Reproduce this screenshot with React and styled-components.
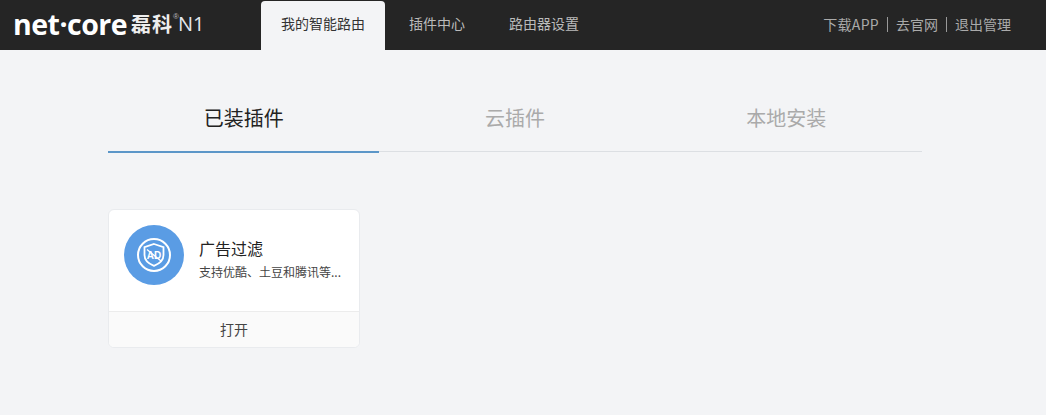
import React, { useState } from 'react'
import styled, { createGlobalStyle } from 'styled-components'

const GlobalStyle = createGlobalStyle`
  html, body {
    margin: 0;
    padding: 0;
    background: #f3f4f6;
    font-family: "Noto Sans CJK SC", "Liberation Sans", sans-serif;
  }
  * { box-sizing: border-box; }
`

const navItems = ['我的智能路由', '插件中心', '路由器设置']
const tabItems = ['已装插件', '云插件', '本地安装']
const headerLinks = ['下载APP', '去官网', '退出管理']

function AdIcon() {
  return (
    <svg width="36" height="36" viewBox="0 0 36 36" fill="none" stroke="#fff">
      <circle cx="18" cy="18" r="16" strokeWidth="2" />
      <path d="M18 7l9.500 3.200v7.800c0 5-4 8.700-9.500 10.800-5.500-2.100-9.500-5.800-9.500-10.800v-7.800z" strokeWidth="1.800" />
      <path d="M11 12.500l14 11.500" strokeWidth="1.300" />
      <text x="18" y="22" textAnchor="middle" fontSize="10" fontWeight="700" fill="#fff" stroke="none" fontFamily="Liberation Sans, sans-serif">AD</text>
    </svg>
  )
}

export default function App() {
  const [active, setActive] = useState(0)
  return (
    <Page>
      <GlobalStyle />
      <Header>
        <Logo>
          <LogoWord>net·core</LogoWord>
          <LogoCn>磊科</LogoCn>
          <LogoMark>®</LogoMark>
          <LogoModel>N1</LogoModel>
        </Logo>
        <Nav>
          {navItems.map((item, i) => (
            <NavItem key={item} $active={i === 0}>{item}</NavItem>
          ))}
        </Nav>
        <HeaderLinks>
          {headerLinks.map((item, i) => (
            <HeaderLink key={item} $first={i === 0}>{item}</HeaderLink>
          ))}
        </HeaderLinks>
      </Header>
      <Main>
        <Tabs>
          {tabItems.map((item, i) => (
            <Tab key={item} $active={i === active} onClick={() => setActive(i)}>{item}</Tab>
          ))}
        </Tabs>
        <Card>
          <CardBody>
            <IconCircle><AdIcon /></IconCircle>
            <CardText>
              <CardTitle>广告过滤</CardTitle>
              <CardDesc>支持优酷、土豆和腾讯等...</CardDesc>
            </CardText>
          </CardBody>
          <CardFooter>打开</CardFooter>
        </Card>
      </Main>
    </Page>
  )
}

const Page = styled.div`
  width: 1046px;
  height: 415px;
  overflow: hidden;
  background: #f3f4f6;
`

const Header = styled.div`
  height: 50px;
  background: #252525;
  display: flex;
  align-items: flex-end;
  padding-left: 13px;
`

const Logo = styled.div`
  width: 248px;
  height: 48px;
  align-self: flex-start;
  display: flex;
  align-items: center;
  color: #fff;
  white-space: nowrap;
`

const LogoWord = styled.span`
  font-family: "Open Sans", sans-serif;
  font-size: 28.5px;
  font-weight: 700;
  letter-spacing: -0.5px;
  line-height: 1;
  width: 118px;
`

const LogoCn = styled.span`
  font-size: 20px;
  font-weight: 700;
  line-height: 1;
  letter-spacing: 1px;
  color: #eee;
`

const LogoMark = styled.span`
  font-family: "Liberation Sans", sans-serif;
  font-size: 8px;
  color: #bbb;
  align-self: flex-start;
  margin-top: 12px;
  width: 5px;
`

const LogoModel = styled.span`
  font-family: "Open Sans", sans-serif;
  font-size: 20px;
  color: #e4e8ee;
  line-height: 1;
`

const Nav = styled.div`
  display: flex;
  gap: 4px;
`

const NavItem = styled.div`
  height: 49px;
  padding: 0 20px;
  font-size: 14px;
  line-height: 45px;
  border-radius: 4px 4px 0 0;
  color: ${({ $active }) => ($active ? '#333' : '#bbb')};
  background: ${({ $active }) => ($active ? '#f3f4f6' : 'transparent')};
`

const HeaderLinks = styled.div`
  margin-left: auto;
  height: 48px;
  align-self: flex-start;
  padding-right: 35px;
  display: flex;
  align-items: center;
`

const HeaderLink = styled.div`
  font-size: 14px;
  line-height: 15px;
  color: #aaa;
  padding-left: ${({ $first }) => ($first ? '0' : '8px')};
  margin-left: ${({ $first }) => ($first ? '0' : '8px')};
  border-left: ${({ $first }) => ($first ? 'none' : '1px solid #999')};
  letter-spacing: ${({ $first }) => ($first ? '0.3px' : '0')};
`

const Main = styled.div`
  padding: 46px 0 0 108px;
`

const Tabs = styled.div`
  width: 814px;
  display: flex;
  border-bottom: 1px solid #dcdfe3;
`

const Tab = styled.div`
  flex: 1;
  height: 57px;
  margin-bottom: -2px;
  text-align: center;
  font-size: 20px;
  line-height: 43px;
  cursor: pointer;
  color: ${({ $active }) => ($active ? '#222' : '#aaa')};
  border-bottom: 2px solid ${({ $active }) => ($active ? '#5b96c8' : 'transparent')};
`

const Card = styled.div`
  width: 252px;
  height: 139px;
  margin-top: 57px;
  background: #fff;
  border: 1px solid #e9ebee;
  border-radius: 6px;
  overflow: hidden;
  display: flex;
  flex-direction: column;
`

const CardBody = styled.div`
  flex: 1;
  display: flex;
  padding: 15px 15px 0;
  gap: 15px;
`

const IconCircle = styled.div`
  width: 60px;
  height: 60px;
  border-radius: 50%;
  background: #5a9ce4;
  display: flex;
  align-items: center;
  justify-content: center;
`

const CardText = styled.div`
  padding-top: 12px;
  min-width: 0;
`

const CardTitle = styled.div`
  font-size: 16px;
  line-height: 22px;
  color: #222;
`

const CardDesc = styled.div`
  margin-top: 4px;
  font-size: 12px;
  line-height: 18px;
  color: #444;
  white-space: nowrap;
`

const CardFooter = styled.div`
  height: 36px;
  background: #fafafa;
  border-top: 1px solid #ececec;
  text-align: center;
  font-size: 14px;
  line-height: 34px;
  color: #444;
`
